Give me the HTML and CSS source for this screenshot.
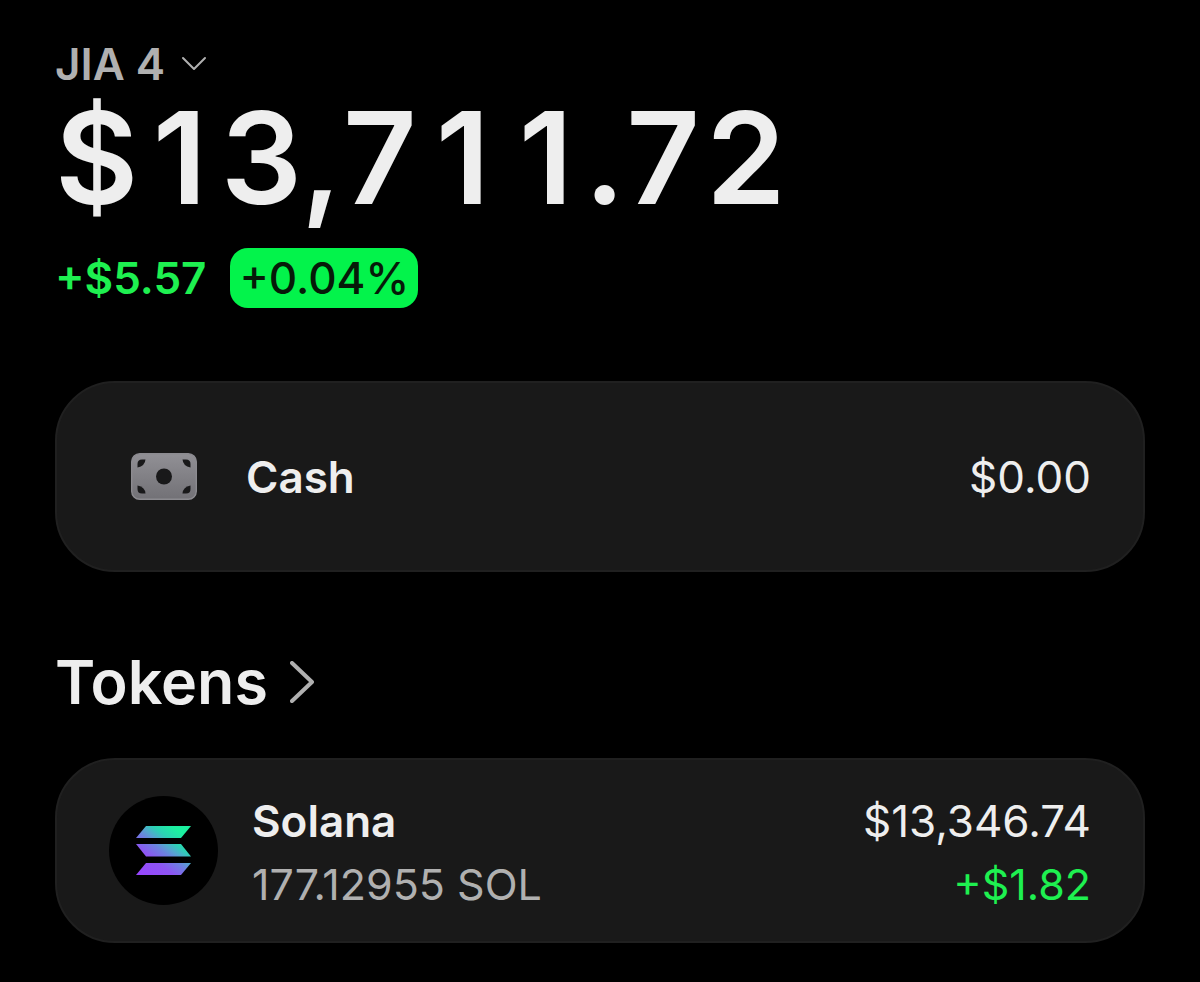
FILE: index.html
```html
<!DOCTYPE html>
<html lang="en">
<head>
    <meta charset="utf-8" />
    <meta name="viewport" content="width=device-width, initial-scale=1" />
    <title>Wallet</title>

    <link rel="stylesheet" href="styles.css">
</head>

<body>

    <header class="summary">
        <button class="account" type="button">
            JIA 4
            <svg class="chevron-down" viewBox="0 0 26 16" aria-hidden="true">
                <path d="M2 2 L13 13 L24 2" />
            </svg>
        </button>

        <h1 class="balance">$<span class="one">1</span>3,7<span class="one">1</span><span class="one">1</span>.72</h1>

        <div class="change">
            <span class="amount">+$5.57</span>
            <span class="badge">+0.04%</span>
        </div>
    </header>

    <main>
        <section class="card cash">
            <div class="icon">
                <svg class="bill" viewBox="0 0 66 47" aria-hidden="true">
                    <defs>
                        <linearGradient id="billFill" x1="0" y1="0" x2="0" y2="1">
                            <stop offset="0" stop-color="#919095" />
                            <stop offset="1" stop-color="#727176" />
                        </linearGradient>
                    </defs>
                    <rect x="0.7" y="0.7" width="64.6" height="45.6" rx="8" fill="url(#billFill)" stroke="#8c8b90" stroke-width="1.4" />
                    <circle cx="33" cy="23.500" r="8" fill="#19191a" />
                    <g fill="#19191a">
                        <path d="M11 6.500 H14.500 Q14 13 6.500 14.500 V11 Q6.500 6.500 11 6.500 Z" />
                        <path d="M55 6.500 H51.500 Q52 13 59.500 14.500 V11 Q59.500 6.500 55 6.500 Z" />
                        <path d="M11 40.500 H14.500 Q14 34 6.500 32.500 V36 Q6.500 40.500 11 40.500 Z" />
                        <path d="M55 40.500 H51.500 Q52 34 59.500 32.500 V36 Q59.500 40.500 55 40.500 Z" />
                    </g>
                </svg>
            </div>
            <h2 class="name">Cash</h2>
            <div class="value">$0.00</div>
        </section>

        <h2 class="section-title">
            <a href="#tokens">
                Tokens
                <svg class="chevron-right" viewBox="0 0 24 42" aria-hidden="true">
                    <path d="M2 2 L22 21 L2 40" />
                </svg>
            </a>
        </h2>

        <section class="card token" id="tokens">
            <div class="icon">
                <svg class="coin" viewBox="0 0 109 109" aria-hidden="true">
                    <defs>
                        <linearGradient id="solFill" gradientUnits="userSpaceOnUse" x1="34" y1="84" x2="80" y2="24">
                            <stop offset="0" stop-color="#9945ff" />
                            <stop offset="0.3" stop-color="#8d55f3" />
                            <stop offset="0.46" stop-color="#6c82e0" />
                            <stop offset="0.54" stop-color="#55a5d0" />
                            <stop offset="0.64" stop-color="#2dd0b5" />
                            <stop offset="0.8" stop-color="#1cf0a0" />
                        </linearGradient>
                    </defs>
                    <circle cx="54.500" cy="54.500" r="54.500" fill="#000" />
                    <g fill="url(#solFill)">
                        <path d="M37 30 H82 L72 42 H27 Z" />
                        <path d="M27 48 H72 L82 60.500 H37 Z" />
                        <path d="M37 67 H82 L72 79 H27 Z" />
                    </g>
                </svg>
            </div>
            <div class="info">
                <h3 class="name">Solana</h3>
                <p class="sub">177.12955 SOL</p>
            </div>
            <div class="info right">
                <p class="value">$13,346.74</p>
                <p class="sub gain">+$1.82</p>
            </div>
        </section>
    </main>

</body>
</html>
```
FILE: styles.css
```css
* {
    box-sizing: border-box;
}

body {
    margin: 0;
    padding: 36px 55px 39px;
    background: #000;
    color: #eee;
    font-family: Inter, "Liberation Sans", sans-serif;
}

h1, h2, h3, p {
    margin: 0;
}

svg {
    display: block;
}

.account {
    display: flex;
    align-items: center;
    gap: 16px;
    padding: 0;
    border: 0;
    background: none;
    color: #b0b0b0;
    font-family: inherit;
    font-size: 44px;
    font-weight: 600;
    line-height: 56px;
    cursor: pointer;
}

.chevron-down {
    width: 26px;
    height: 16px;
}

.chevron-down path,
.chevron-right path {
    fill: none;
    stroke: #b0b0b0;
    stroke-width: 2;
    stroke-linecap: round;
    stroke-linejoin: round;
}

.balance {
    font-size: 128px;
    font-weight: 600;
    line-height: 132px;
    font-variant-numeric: tabular-nums;
}

/* plain 1 without the foot, in a cell as wide as the other digits */
.one {
    display: inline-block;
    width: 83px;
    text-align: center;
    font-variant-numeric: normal;
}

.change {
    display: flex;
    align-items: center;
    gap: 24px;
    margin-top: 24px;
    font-size: 44px;
    line-height: 60px;
}

.amount {
    color: #1ef050;
    font-weight: 600;
}

.badge {
    padding: 0 9px;
    border-radius: 18px;
    background: #03f34b;
    color: #061a08;
    font-weight: 500;
}

.card {
    display: flex;
    align-items: center;
    padding: 0 52px;
    border: 2px solid #202020;
    border-radius: 60px;
    background: #191919;
}

.cash {
    height: 191px;
    margin-top: 73px;
    gap: 28px;
}

.token {
    height: 185px;
    gap: 34px;
}

.icon {
    display: flex;
    justify-content: center;
    flex: none;
    width: 109px;
}

.bill {
    width: 66px;
    height: 47px;
}

.coin {
    width: 109px;
    height: 109px;
}

.name {
    font-size: 44px;
    font-weight: 600;
    line-height: 62px;
}

.value {
    margin-left: auto;
    font-size: 44px;
    line-height: 62px;
}

.section-title {
    margin: 70px 0 36px;
    font-size: 61px;
    font-weight: 600;
    line-height: 80px;
}

.section-title a {
    display: inline-flex;
    align-items: center;
    gap: 22px;
    color: inherit;
    text-decoration: none;
}

.chevron-right {
    width: 24px;
    height: 42px;
}

.chevron-right path {
    stroke-width: 4;
}

.info {
    padding-top: 4px;
}

.right {
    margin-left: auto;
    text-align: right;
}

.sub {
    color: #b0b0b0;
    font-size: 43px;
    line-height: 64px;
}

.gain {
    color: #1ef050;
}
```
